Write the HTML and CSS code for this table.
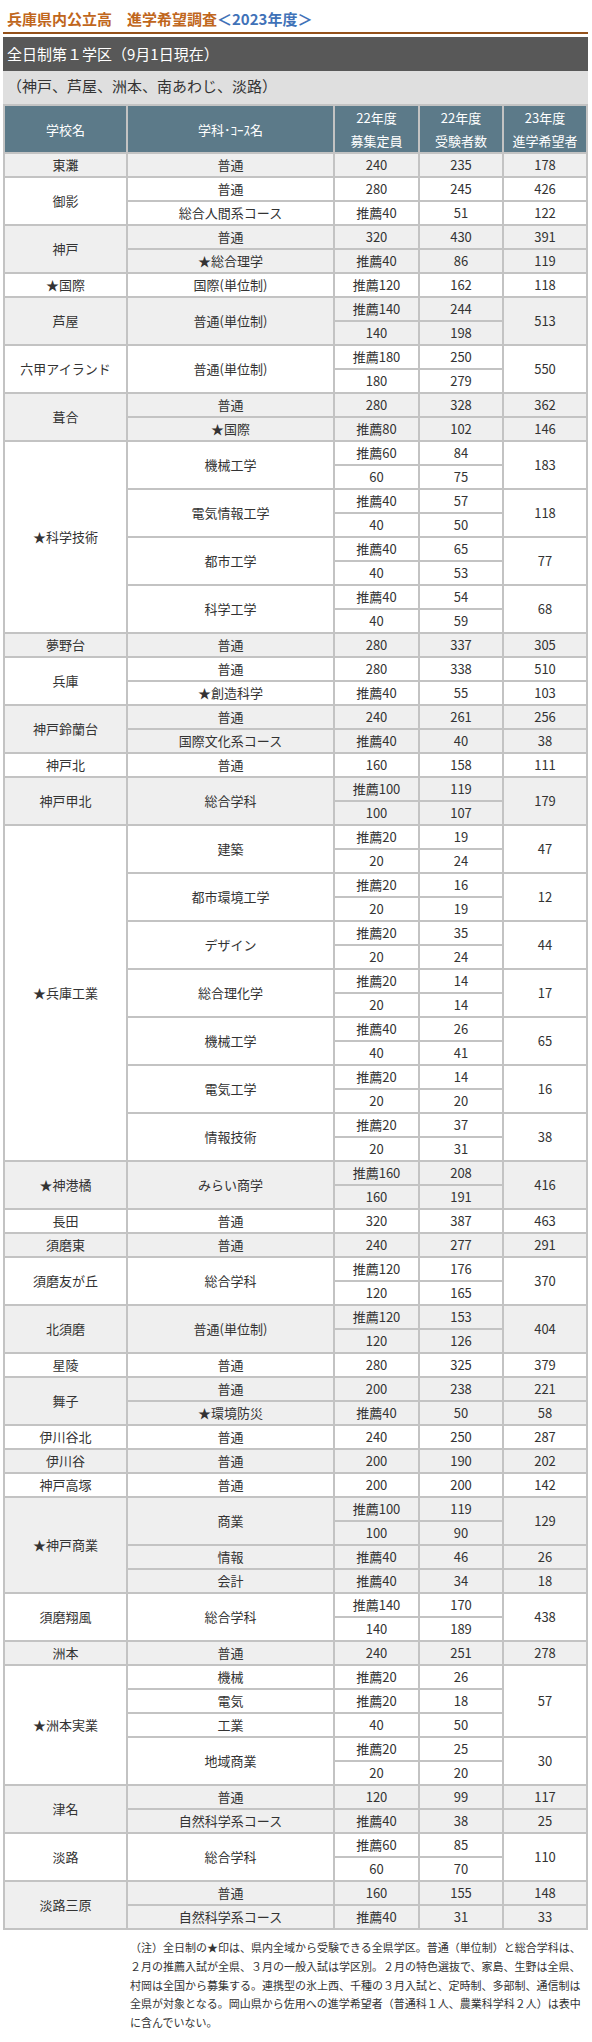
FILE: index.html
```html
<!DOCTYPE html>
<html lang="ja">
<head>
<meta charset="utf-8">
<title>兵庫県内公立高 進学希望調査</title>
<link rel="stylesheet" href="styles.css">
</head>
<body>
<div class="page">
  <h1 class="title">兵庫県内公立高　進学希望調査<span class="year">＜2023年度＞</span></h1>
  <div class="district">全日制第１学区（9月1日現在）</div>
  <div class="area">（神戸、芦屋、洲本、南あわじ、淡路）</div>
  <table class="survey">
    <colgroup>
      <col class="c1"><col class="c2"><col class="c3"><col class="c4"><col class="c5">
    </colgroup>
    <thead>
      <tr><th>学校名</th><th>学科･ｺｰｽ名</th><th>22年度<br>募集定員</th><th>22年度<br>受験者数</th><th>23年度<br>進学希望者</th></tr>
    </thead>
    <tbody>
      <tr><td>東灘</td><td>普通</td><td>240</td><td>235</td><td>178</td></tr>
    </tbody>
    <tbody>
      <tr><td rowspan="2">御影</td><td>普通</td><td>280</td><td>245</td><td>426</td></tr>
      <tr><td>総合人間系コース</td><td>推薦40</td><td>51</td><td>122</td></tr>
    </tbody>
    <tbody>
      <tr><td rowspan="2">神戸</td><td>普通</td><td>320</td><td>430</td><td>391</td></tr>
      <tr><td>★総合理学</td><td>推薦40</td><td>86</td><td>119</td></tr>
    </tbody>
    <tbody>
      <tr><td>★国際</td><td>国際(単位制)</td><td>推薦120</td><td>162</td><td>118</td></tr>
    </tbody>
    <tbody>
      <tr><td rowspan="2">芦屋</td><td rowspan="2">普通(単位制)</td><td>推薦140</td><td>244</td><td rowspan="2">513</td></tr>
      <tr><td>140</td><td>198</td></tr>
    </tbody>
    <tbody>
      <tr><td rowspan="2">六甲アイランド</td><td rowspan="2">普通(単位制)</td><td>推薦180</td><td>250</td><td rowspan="2">550</td></tr>
      <tr><td>180</td><td>279</td></tr>
    </tbody>
    <tbody>
      <tr><td rowspan="2">葺合</td><td>普通</td><td>280</td><td>328</td><td>362</td></tr>
      <tr><td>★国際</td><td>推薦80</td><td>102</td><td>146</td></tr>
    </tbody>
    <tbody>
      <tr><td rowspan="8">★科学技術</td><td rowspan="2">機械工学</td><td>推薦60</td><td>84</td><td rowspan="2">183</td></tr>
      <tr><td>60</td><td>75</td></tr>
      <tr><td rowspan="2">電気情報工学</td><td>推薦40</td><td>57</td><td rowspan="2">118</td></tr>
      <tr><td>40</td><td>50</td></tr>
      <tr><td rowspan="2">都市工学</td><td>推薦40</td><td>65</td><td rowspan="2">77</td></tr>
      <tr><td>40</td><td>53</td></tr>
      <tr><td rowspan="2">科学工学</td><td>推薦40</td><td>54</td><td rowspan="2">68</td></tr>
      <tr><td>40</td><td>59</td></tr>
    </tbody>
    <tbody>
      <tr><td>夢野台</td><td>普通</td><td>280</td><td>337</td><td>305</td></tr>
    </tbody>
    <tbody>
      <tr><td rowspan="2">兵庫</td><td>普通</td><td>280</td><td>338</td><td>510</td></tr>
      <tr><td>★創造科学</td><td>推薦40</td><td>55</td><td>103</td></tr>
    </tbody>
    <tbody>
      <tr><td rowspan="2">神戸鈴蘭台</td><td>普通</td><td>240</td><td>261</td><td>256</td></tr>
      <tr><td>国際文化系コース</td><td>推薦40</td><td>40</td><td>38</td></tr>
    </tbody>
    <tbody>
      <tr><td>神戸北</td><td>普通</td><td>160</td><td>158</td><td>111</td></tr>
    </tbody>
    <tbody>
      <tr><td rowspan="2">神戸甲北</td><td rowspan="2">総合学科</td><td>推薦100</td><td>119</td><td rowspan="2">179</td></tr>
      <tr><td>100</td><td>107</td></tr>
    </tbody>
    <tbody>
      <tr><td rowspan="14">★兵庫工業</td><td rowspan="2">建築</td><td>推薦20</td><td>19</td><td rowspan="2">47</td></tr>
      <tr><td>20</td><td>24</td></tr>
      <tr><td rowspan="2">都市環境工学</td><td>推薦20</td><td>16</td><td rowspan="2">12</td></tr>
      <tr><td>20</td><td>19</td></tr>
      <tr><td rowspan="2">デザイン</td><td>推薦20</td><td>35</td><td rowspan="2">44</td></tr>
      <tr><td>20</td><td>24</td></tr>
      <tr><td rowspan="2">総合理化学</td><td>推薦20</td><td>14</td><td rowspan="2">17</td></tr>
      <tr><td>20</td><td>14</td></tr>
      <tr><td rowspan="2">機械工学</td><td>推薦40</td><td>26</td><td rowspan="2">65</td></tr>
      <tr><td>40</td><td>41</td></tr>
      <tr><td rowspan="2">電気工学</td><td>推薦20</td><td>14</td><td rowspan="2">16</td></tr>
      <tr><td>20</td><td>20</td></tr>
      <tr><td rowspan="2">情報技術</td><td>推薦20</td><td>37</td><td rowspan="2">38</td></tr>
      <tr><td>20</td><td>31</td></tr>
    </tbody>
    <tbody>
      <tr><td rowspan="2">★神港橘</td><td rowspan="2">みらい商学</td><td>推薦160</td><td>208</td><td rowspan="2">416</td></tr>
      <tr><td>160</td><td>191</td></tr>
    </tbody>
    <tbody>
      <tr><td>長田</td><td>普通</td><td>320</td><td>387</td><td>463</td></tr>
    </tbody>
    <tbody>
      <tr><td>須磨東</td><td>普通</td><td>240</td><td>277</td><td>291</td></tr>
    </tbody>
    <tbody>
      <tr><td rowspan="2">須磨友が丘</td><td rowspan="2">総合学科</td><td>推薦120</td><td>176</td><td rowspan="2">370</td></tr>
      <tr><td>120</td><td>165</td></tr>
    </tbody>
    <tbody>
      <tr><td rowspan="2">北須磨</td><td rowspan="2">普通(単位制)</td><td>推薦120</td><td>153</td><td rowspan="2">404</td></tr>
      <tr><td>120</td><td>126</td></tr>
    </tbody>
    <tbody>
      <tr><td>星陵</td><td>普通</td><td>280</td><td>325</td><td>379</td></tr>
    </tbody>
    <tbody>
      <tr><td rowspan="2">舞子</td><td>普通</td><td>200</td><td>238</td><td>221</td></tr>
      <tr><td>★環境防災</td><td>推薦40</td><td>50</td><td>58</td></tr>
    </tbody>
    <tbody>
      <tr><td>伊川谷北</td><td>普通</td><td>240</td><td>250</td><td>287</td></tr>
    </tbody>
    <tbody>
      <tr><td>伊川谷</td><td>普通</td><td>200</td><td>190</td><td>202</td></tr>
    </tbody>
    <tbody>
      <tr><td>神戸高塚</td><td>普通</td><td>200</td><td>200</td><td>142</td></tr>
    </tbody>
    <tbody>
      <tr><td rowspan="4">★神戸商業</td><td rowspan="2">商業</td><td>推薦100</td><td>119</td><td rowspan="2">129</td></tr>
      <tr><td>100</td><td>90</td></tr>
      <tr><td>情報</td><td>推薦40</td><td>46</td><td>26</td></tr>
      <tr><td>会計</td><td>推薦40</td><td>34</td><td>18</td></tr>
    </tbody>
    <tbody>
      <tr><td rowspan="2">須磨翔風</td><td rowspan="2">総合学科</td><td>推薦140</td><td>170</td><td rowspan="2">438</td></tr>
      <tr><td>140</td><td>189</td></tr>
    </tbody>
    <tbody>
      <tr><td>洲本</td><td>普通</td><td>240</td><td>251</td><td>278</td></tr>
    </tbody>
    <tbody>
      <tr><td rowspan="5">★洲本実業</td><td>機械</td><td>推薦20</td><td>26</td><td rowspan="3">57</td></tr>
      <tr><td>電気</td><td>推薦20</td><td>18</td></tr>
      <tr><td>工業</td><td>40</td><td>50</td></tr>
      <tr><td rowspan="2">地域商業</td><td>推薦20</td><td>25</td><td rowspan="2">30</td></tr>
      <tr><td>20</td><td>20</td></tr>
    </tbody>
    <tbody>
      <tr><td rowspan="2">津名</td><td>普通</td><td>120</td><td>99</td><td>117</td></tr>
      <tr><td>自然科学系コース</td><td>推薦40</td><td>38</td><td>25</td></tr>
    </tbody>
    <tbody>
      <tr><td rowspan="2">淡路</td><td rowspan="2">総合学科</td><td>推薦60</td><td>85</td><td rowspan="2">110</td></tr>
      <tr><td>60</td><td>70</td></tr>
    </tbody>
    <tbody>
      <tr><td rowspan="2">淡路三原</td><td>普通</td><td>160</td><td>155</td><td>148</td></tr>
      <tr><td>自然科学系コース</td><td>推薦40</td><td>31</td><td>33</td></tr>
    </tbody>
  </table>
  <p class="note">（注）全日制の★印は、県内全域から受験できる全県学区。普通（単位制）と総合学科は、<br>２月の推薦入試が全県、３月の一般入試は学区別。２月の特色選抜で、家島、生野は全県、<br>村岡は全国から募集する。連携型の氷上西、千種の３月入試と、定時制、多部制、通信制は<br>全県が対象となる。岡山県から佐用への進学希望者（普通科１人、農業科学科２人）は表中<br>に含んでいない。</p>
</div>
</body>
</html>
```

FILE: styles.css
```css
html, body {
  margin: 0;
  padding: 0;
  background: #ffffff;
}

body {
  font-family: "Noto Sans CJK JP", "Noto Sans", sans-serif;
  color: #333333;
}

.page {
  margin-left: 3px;
  width: 585px;
}

.title {
  margin: 0 0 3px 0;
  padding: 6px 0 0 4px;
  height: 26px;
  line-height: 26px;
  font-size: 15px;
  font-weight: bold;
  color: #c0661c;
  border-bottom: 2px solid #94511a;
  white-space: nowrap;
}

.title .year {
  color: #3f72b8;
}

.district {
  height: 34px;
  line-height: 33px;
  padding-left: 4px;
  font-size: 15px;
  color: #ffffff;
  background: #585858;
  white-space: nowrap;
}

.area {
  height: 33px;
  line-height: 30px;
  padding-left: 4px;
  font-size: 15px;
  color: #333333;
  background: #dfdfdf;
  white-space: nowrap;
}

.survey {
  width: 585px;
  table-layout: fixed;
  border-collapse: separate;
  border-spacing: 0;
  border-top: 2px solid #c3c3c3;
  border-left: 2px solid #c3c3c3;
  font-size: 13px;
}

.survey .c1 { width: 123px; }
.survey .c2 { width: 207px; }
.survey .c3 { width: 85px; }
.survey .c4 { width: 84px; }
.survey .c5 { width: 84px; }

.survey th,
.survey td {
  padding: 0;
  text-align: center;
  vertical-align: middle;
  border-right: 2px solid #c3c3c3;
  border-bottom: 2px solid #c3c3c3;
  white-space: nowrap;
}

.survey th {
  height: 44px;
  line-height: 23px;
  font-weight: normal;
  color: #ffffff;
  background: #5c7a89;
}

.survey tbody tr {
  height: 24px;
}

.survey td {
  line-height: 20px;
  color: #333333;
}

.survey tbody:nth-of-type(odd) td {
  background: #efefef;
}

.survey tbody:nth-of-type(even) td {
  background: #ffffff;
}

.note {
  margin: 8px 0 0 127px;
  font-size: 11px;
  line-height: 18.75px;
  color: #333333;
  white-space: nowrap;
}
```
